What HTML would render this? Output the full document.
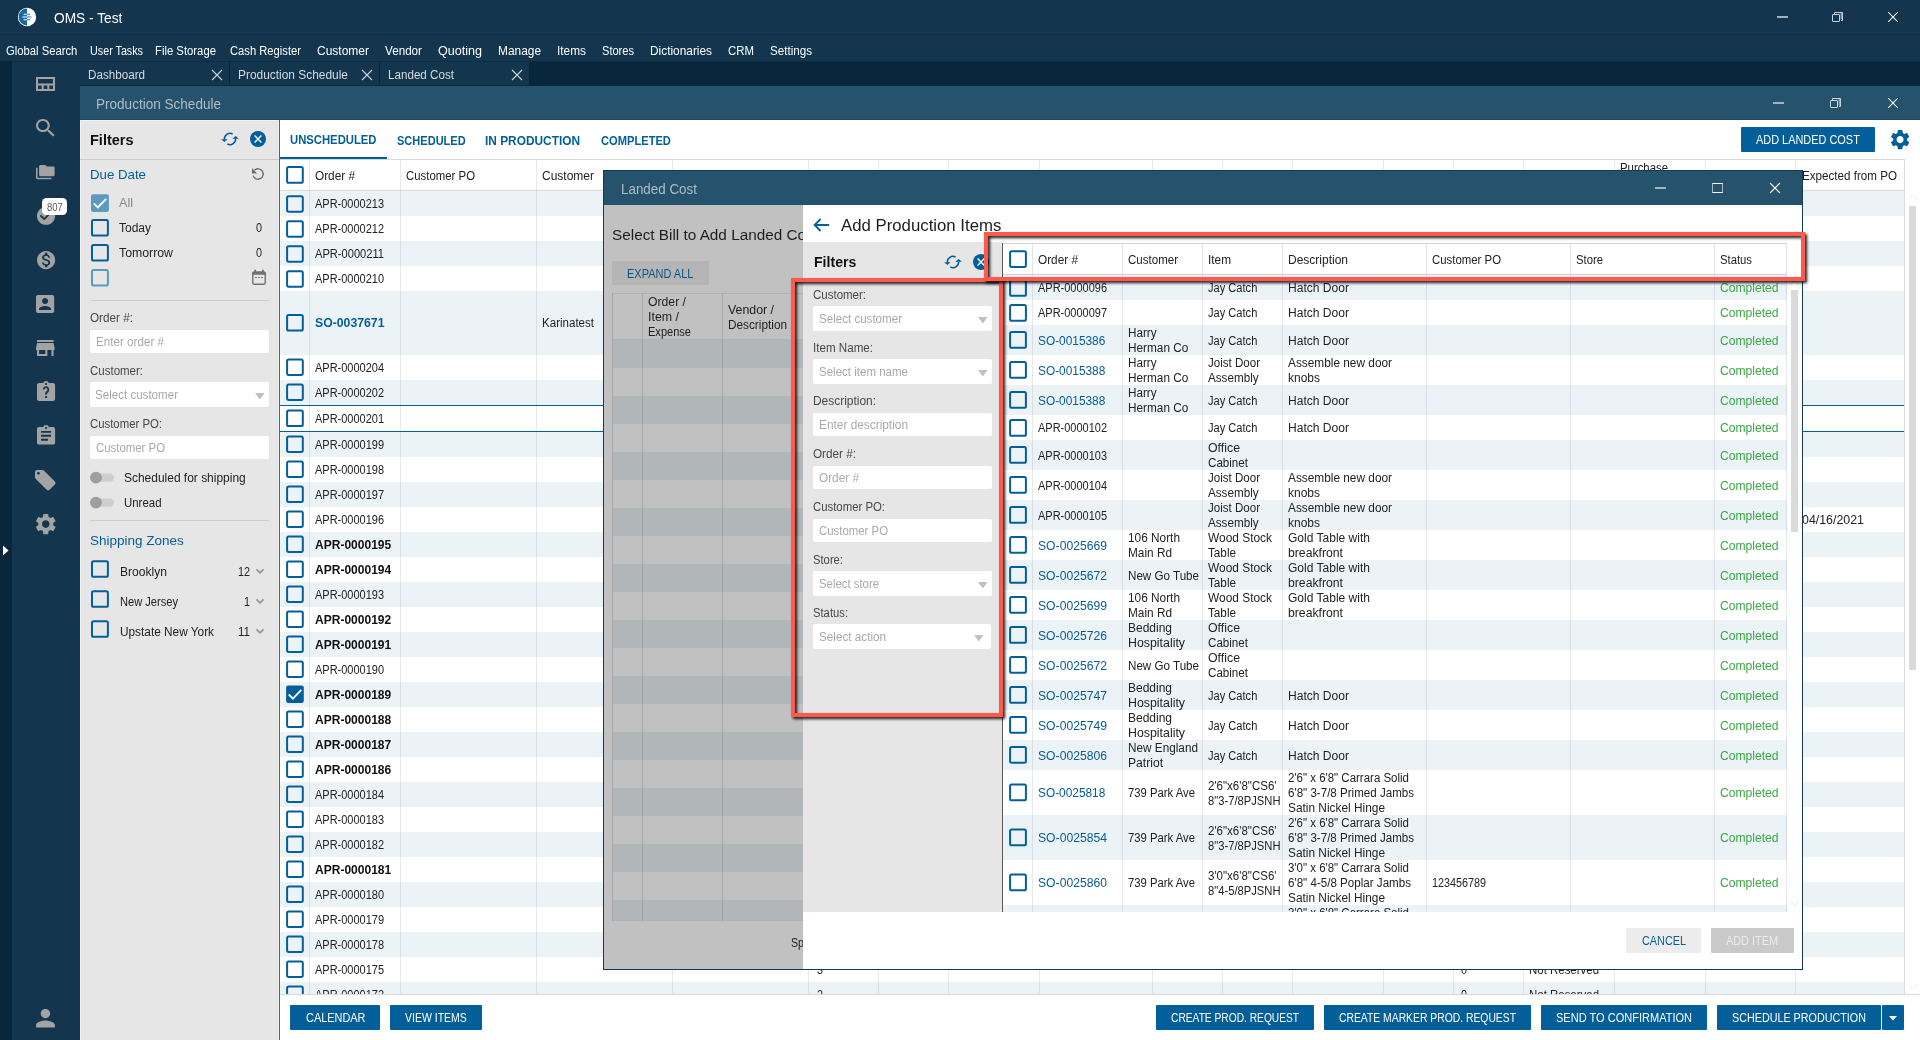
<!DOCTYPE html><html><head><meta charset="utf-8"><title>OMS - Test</title><style>
html,body{margin:0;padding:0}
body{width:1920px;height:1040px;overflow:hidden;position:relative;background:#fff;
font-family:"Liberation Sans",sans-serif;}
div,svg,.t{position:absolute}
.t{white-space:nowrap;line-height:1;transform-origin:0 50%}
svg{overflow:visible}
</style></head><body><div style="left:0px;top:0px;width:1920px;height:1040px;background:#fff;"></div><div style="left:0px;top:0px;width:1920px;height:61px;background:#13364e;"></div><div style="left:0px;top:34px;width:1920px;height:1px;background:#0e2c43;"></div><div style="left:0px;top:61px;width:1920px;height:25px;background:#09273c;"></div><div style="left:0px;top:61px;width:12px;height:979px;background:#09273c;"></div><div style="left:12px;top:62px;width:68px;height:978px;background:#13364e;"></div><div style="left:12px;top:61px;width:1908px;height:1px;background:#0b2b43;"></div><svg style="left:17px;top:7px;width:20px;height:20px" viewBox="0 0 20 20"><circle cx="10" cy="10" r="9.2" fill="#fff"/><path d="M10 1.6 A8.4 8.4 0 0 0 10 18.4 Z" fill="#1468a6"/><g stroke="#fff" stroke-width="1.1"><path d="M6.6 7.3H10M5.4 10H10M6.6 12.7H10"/></g><g stroke="#1468a6" stroke-width="1.1"><path d="M10 7.3H13.2M10 10H14.4M10 12.7H13.2"/></g><path d="M6 10H14" stroke="#8fb8d6" stroke-width="2.2"/></svg><span class="t" style="left:54.20px;top:11.00px;font-size:14px;color:#fff;transform:scaleX(0.9806);">OMS - Test</span><div style="left:1777px;top:16px;width:11px;height:2px;background:#a3b2bd;"></div><div style="left:1832px;top:14px;width:8px;height:8px;border:1px solid #c9d3da;box-sizing:border-box;border-radius:1px;"></div><svg style="left:1834px;top:12px;width:9px;height:9px" viewBox="0 0 9 9"><path d="M0.5 2V0.5H8.5V8.5H7" fill="none" stroke="#c9d3da" stroke-width="1"/><path d="M6.5 0.5H8.5V7.5H6.5Z" fill="#c9d3da" opacity=".6"/></svg><svg style="left:1887.5px;top:12px;width:10px;height:10px" viewBox="0 0 10 10"><path d="M0.2 0.2L9.8 9.8M9.8 0.2L0.2 9.8" stroke="#f4f6f8" stroke-width="1.05"/></svg><span class="t" style="left:6.20px;top:45.00px;font-size:12px;color:#fff;transform:scaleX(0.9376);">Global Search</span><span class="t" style="left:90.00px;top:45.00px;font-size:12px;color:#fff;transform:scaleX(0.8964);">User Tasks</span><span class="t" style="left:155.00px;top:45.00px;font-size:12px;color:#fff;transform:scaleX(0.9428);">File Storage</span><span class="t" style="left:230.00px;top:45.00px;font-size:12px;color:#fff;transform:scaleX(0.9338);">Cash Register</span><span class="t" style="left:317.00px;top:45.00px;font-size:12px;color:#fff;transform:scaleX(0.9997);">Customer</span><span class="t" style="left:385.00px;top:45.00px;font-size:12px;color:#fff;transform:scaleX(0.9728);">Vendor</span><span class="t" style="left:438.00px;top:45.00px;font-size:12px;color:#fff;transform:scaleX(1.0469);">Quoting</span><span class="t" style="left:498.00px;top:45.00px;font-size:12px;color:#fff;transform:scaleX(0.9915);">Manage</span><span class="t" style="left:557.00px;top:45.00px;font-size:12px;color:#fff;transform:scaleX(0.9885);">Items</span><span class="t" style="left:602.00px;top:45.00px;font-size:12px;color:#fff;transform:scaleX(0.9226);">Stores</span><span class="t" style="left:650.00px;top:45.00px;font-size:12px;color:#fff;transform:scaleX(0.9890);">Dictionaries</span><span class="t" style="left:728.00px;top:45.00px;font-size:12px;color:#fff;transform:scaleX(0.9514);">CRM</span><span class="t" style="left:770.00px;top:45.00px;font-size:12px;color:#fff;transform:scaleX(0.9686);">Settings</span><div style="left:80px;top:62px;width:149px;height:23px;background:#13364e;"></div><span class="t" style="left:88.00px;top:69.00px;font-size:12px;color:#d6dadd;transform:scaleX(0.9709);">Dashboard</span><svg style="left:212px;top:69.5px;width:10px;height:10px" viewBox="0 0 10 10"><path d="M0 0L10 10M10 0L0 10" stroke="#c9d3da" stroke-width="1.1"/></svg><div style="left:230px;top:62px;width:149px;height:23px;background:#13364e;"></div><span class="t" style="left:238.00px;top:69.00px;font-size:12px;color:#d6dadd;transform:scaleX(0.9933);">Production Schedule</span><svg style="left:362px;top:69.5px;width:10px;height:10px" viewBox="0 0 10 10"><path d="M0 0L10 10M10 0L0 10" stroke="#c9d3da" stroke-width="1.1"/></svg><div style="left:380px;top:62px;width:149px;height:23px;background:#13364e;"></div><span class="t" style="left:388.00px;top:69.00px;font-size:12px;color:#d6dadd;transform:scaleX(0.9698);">Landed Cost</span><svg style="left:512px;top:69.5px;width:10px;height:10px" viewBox="0 0 10 10"><path d="M0 0L10 10M10 0L0 10" stroke="#c9d3da" stroke-width="1.1"/></svg><svg style="left:36px;top:77px;width:19px;height:14px" viewBox="0 0 19 14"><path d="M1 1H18V13H1Z M1 7.6H18 M6.7 7.6V13 M12.3 7.6V13" fill="none" stroke="#a3a3a3" stroke-width="2"/></svg><svg style="left:36px;top:119.2px;width:18.60px;height:17.60px" viewBox="3 3 17.49 17.49" preserveAspectRatio="none" fill="#a3a3a3"><path d="M15.5 14h-.79l-.28-.27C15.41 12.59 16 11.11 16 9.5 16 5.91 13.09 3 9.5 3S3 5.91 3 9.5 5.91 16 9.5 16c1.61 0 3.09-.59 4.23-1.57l.27.28v.79l5 4.99L20.49 19l-4.99-5zm-6 0C7.01 14 5 11.99 5 9.5S7.01 5 9.5 5 14 7.01 14 9.5 11.99 14 9.5 14z"/></svg><svg style="left:36px;top:164.8px;width:18.60px;height:14.20px" viewBox="0 2 24 20" preserveAspectRatio="none" fill="#a3a3a3"><path d="M2 6H0v5h.01L0 20c0 1.1.9 2 2 2h18v-2H2V6zm20-2h-8l-2-2H6c-1.1 0-1.99.9-1.99 2L4 16c0 1.1.9 2 2 2h16c1.1 0 2-.9 2-2V6c0-1.1-.9-2-2-2z"/></svg><svg style="left:36.5px;top:207.3px;width:18.10px;height:17.80px" viewBox="2 2 20 20" preserveAspectRatio="none" fill="#a3a3a3"><path d="M12 2C6.48 2 2 6.48 2 12s4.48 10 10 10 10-4.48 10-10S17.52 2 12 2zm-2 15l-5-5 1.41-1.41L10 14.17l7.59-7.59L19 8l-9 9z"/></svg><svg style="left:36.5px;top:251px;width:18.20px;height:18.20px" viewBox="2 2 20 20" preserveAspectRatio="none" fill="#a3a3a3"><path d="M12 2C6.48 2 2 6.48 2 12s4.48 10 10 10 10-4.48 10-10S17.52 2 12 2zm1.41 16.09V20h-2.67v-1.93c-1.71-.36-3.16-1.46-3.27-3.4h1.96c.1 1.05.82 1.87 2.65 1.87 1.96 0 2.4-.98 2.4-1.59 0-.83-.44-1.61-2.67-2.14-2.48-.6-4.18-1.62-4.18-3.67 0-1.72 1.39-2.84 3.11-3.21V4h2.67v1.95c1.86.45 2.79 1.86 2.85 3.39H14.3c-.05-1.11-.64-1.87-2.22-1.87-1.5 0-2.4.68-2.4 1.64 0 .84.65 1.39 2.67 1.91s4.18 1.39 4.18 3.91c-.01 1.83-1.38 2.83-3.12 3.16z"/></svg><svg style="left:36.4px;top:294.9px;width:18.20px;height:18.10px" viewBox="3 3 18 18" preserveAspectRatio="none" fill="#a3a3a3"><path d="M3 5v14c0 1.1.89 2 2 2h14c1.1 0 2-.9 2-2V5c0-1.1-.9-2-2-2H5c-1.11 0-2 .9-2 2zm12 4c0 1.66-1.34 3-3 3s-3-1.34-3-3 1.34-3 3-3 3 1.34 3 3zm-9 8c0-2 4-3.1 6-3.1s6 1.1 6 3.1v1H6v-1z"/></svg><svg style="left:36.2px;top:340px;width:18.60px;height:16.00px" viewBox="3 4 18 16" preserveAspectRatio="none" fill="#a3a3a3"><path d="M20 4H4v2h16V4zm1 10v-2l-1-5H4l-1 5v2h1v6h10v-6h4v6h2v-6h1zm-9 4H6v-4h6v4z"/></svg><svg style="left:36.5px;top:381px;width:18.10px;height:20.00px" viewBox="3 1 18 20" preserveAspectRatio="none" fill="#a3a3a3"><path d="M19 3h-4.18C14.4 1.84 13.3 1 12 1c-1.3 0-2.4.84-2.82 2H5c-1.1 0-2 .9-2 2v14c0 1.1.9 2 2 2h14c1.1 0 2-.9 2-2V5c0-1.1-.9-2-2-2zm-7 0c.55 0 1 .45 1 1s-.45 1-1 1-1-.45-1-1 .45-1 1-1zm1 15h-2v-2h2v2zm1.6-6.3l-.8.8c-.55.56-.8 1.0-.8 2H11v-.45c0-.95.35-1.75.9-2.3l1.05-1.1c.3-.3.45-.7.45-1.15 0-.9-.65-1.6-1.4-1.6s-1.4.7-1.4 1.6H8.8c0-1.9 1.45-3.3 3.2-3.3s3.2 1.4 3.2 3.3c0 .85-.3 1.6-.6 2.2z"/></svg><svg style="left:36.5px;top:425.4px;width:18.10px;height:19.60px" viewBox="3 1 18 20" preserveAspectRatio="none" fill="#a3a3a3"><path d="M19 3h-4.18C14.4 1.84 13.3 1 12 1c-1.3 0-2.4.84-2.82 2H5c-1.1 0-2 .9-2 2v14c0 1.1.9 2 2 2h14c1.1 0 2-.9 2-2V5c0-1.1-.9-2-2-2zm-7 0c.55 0 1 .45 1 1s-.45 1-1 1-1-.45-1-1 .45-1 1-1zm2 14H7v-2h7v2zm3-4H7v-2h10v2zm0-4H7V7h10v2z"/></svg><svg style="left:35px;top:469.7px;width:20.50px;height:20.30px" viewBox="2 2 20 20" preserveAspectRatio="none" fill="#a3a3a3"><path d="M4 2H9.2c.55 0 1.05.22 1.41.58l10.8 10.8c.78.78.78 2.05 0 2.83l-5.2 5.2c-.78.78-2.05.78-2.83 0L2.58 10.61C2.22 10.25 2 9.75 2 9.2V4c0-1.1.9-2 2-2zM5.3 6.7c.77 0 1.4-.63 1.4-1.4s-.63-1.4-1.4-1.4-1.4.63-1.4 1.4.63 1.4 1.4 1.4z" fill-rule="evenodd"/></svg><svg style="left:35.6px;top:513.9px;width:19.50px;height:20.20px" viewBox="2.62 2.4 18.759999999999998 19.200000000000003" preserveAspectRatio="none" fill="#a3a3a3"><path d="M19.14 12.94c.04-.3.06-.61.06-.94 0-.32-.02-.64-.07-.94l2.03-1.58c.18-.14.23-.41.12-.61l-1.92-3.32c-.12-.22-.37-.29-.59-.22l-2.39.96c-.5-.38-1.03-.7-1.62-.94l-.36-2.54c-.04-.24-.24-.41-.48-.41h-3.84c-.24 0-.43.17-.47.41l-.36 2.54c-.59.24-1.13.57-1.62.94l-2.39-.96c-.22-.08-.47 0-.59.22L2.74 8.87c-.12.21-.08.47.12.61l2.03 1.58c-.05.3-.09.63-.09.94s.02.64.07.94l-2.03 1.58c-.18.14-.23.41-.12.61l1.92 3.32c.12.22.37.29.59.22l2.39-.96c.5.38 1.03.7 1.62.94l.36 2.54c.05.24.24.41.48.41h3.84c.24 0 .44-.17.47-.41l.36-2.54c.59-.24 1.13-.56 1.62-.94l2.39.96c.22.08.47 0 .59-.22l1.92-3.32c.12-.22.07-.47-.12-.61l-2.01-1.58zM12 15.6c-1.98 0-3.6-1.62-3.6-3.6s1.62-3.6 3.6-3.6 3.6 1.62 3.6 3.6-1.62 3.6-3.6 3.6z"/></svg><svg style="left:36px;top:1008.8px;width:18.90px;height:18.40px" viewBox="4 4 16 16" preserveAspectRatio="none" fill="#a3a3a3"><path d="M12 12c2.21 0 4-1.79 4-4s-1.79-4-4-4-4 1.79-4 4 1.79 4 4 4zm0 2c-2.67 0-8 1.34-8 4v2h16v-2c0-2.66-5.33-4-8-4z"/></svg><div style="left:42px;top:198px;width:25px;height:17px;background:#fff;border-radius:4.5px;"></div><span class="t" style="left:46.67px;top:203.00px;font-size:10px;color:#555;transform:scaleX(0.9500);">807</span><svg style="left:3px;top:545px;width:6px;height:11px" viewBox="0 0 6 11"><path d="M0 0.5L5.5 5.5L0 10.5Z" fill="#fff"/></svg><div style="left:80px;top:86px;width:1840px;height:34px;background:#25536e;"></div><span class="t" style="left:96.00px;top:97.00px;font-size:14px;color:#b3bcc3;transform:scaleX(0.9675);">Production Schedule</span><div style="left:1773px;top:102px;width:11px;height:2px;background:#a3b2bd;"></div><div style="left:1830px;top:100px;width:8px;height:8px;border:1px solid #c9d3da;box-sizing:border-box;border-radius:1px;"></div><svg style="left:1832px;top:98px;width:9px;height:9px" viewBox="0 0 9 9"><path d="M0.5 2V0.5H8.5V8.5H7" fill="none" stroke="#c9d3da" stroke-width="1"/><path d="M6.5 0.5H8.5V7.5H6.5Z" fill="#c9d3da" opacity=".6"/></svg><svg style="left:1887.5px;top:98px;width:10px;height:10px" viewBox="0 0 10 10"><path d="M0.2 0.2L9.8 9.8M9.8 0.2L0.2 9.8" stroke="#f4f6f8" stroke-width="1.05"/></svg><div style="left:80px;top:120px;width:199px;height:920px;background:#e6e6e6;"></div><div style="left:80px;top:120px;width:1px;height:920px;background:#f4f4f4;"></div><div style="left:80px;top:120px;width:199px;height:1px;background:#f1f1f1;"></div><div style="left:278px;top:121px;width:1px;height:919px;background:#efefef;"></div><div style="left:279px;top:120px;width:1px;height:920px;background:#5f5f5f;"></div><div style="left:80px;top:119px;width:1840px;height:1px;background:#1c4663;"></div><span class="t" style="left:90.00px;top:132.00px;font-size:15px;color:#111;font-weight:bold;transform:scaleX(0.9686);">Filters</span><svg style="left:220px;top:131px;width:20px;height:16px" viewBox="0 0 20 16"><g fill="none" stroke="#035f99" stroke-width="1.55"><path d="M4.4 8.6A5.6 5.6 0 0 1 12.6 3.05"/><path d="M15.6 7.4A5.6 5.6 0 0 1 7.4 12.95"/></g><path d="M1.1 8.3H7.7L4.4 11.1Z" fill="#035f99"/><path d="M12.3 7.7H18.9L15.6 4.9Z" fill="#035f99"/></svg><svg style="left:250px;top:131px;width:16px;height:16px" viewBox="0 0 16 16"><circle cx="8" cy="8" r="8" fill="#035f99"/><path d="M4.6 4.6L11.4 11.4M11.4 4.6L4.6 11.4" stroke="#fff" stroke-width="1.4"/></svg><div style="left:80px;top:159px;width:199px;height:1px;background:#cdcdcd;"></div><span class="t" style="left:90.00px;top:168.00px;font-size:13px;color:#035f99;transform:scaleX(1.0196);">Due Date</span><svg style="left:251px;top:166.5px;width:14px;height:14px" viewBox="0 0 14 14"><path d="M3.45 3.2A5.2 5.2 0 1 1 2.05 8.61" fill="none" stroke="#6c6c6c" stroke-width="1.4"/><path d="M1 1.2V6.4H6.1Z" fill="#6c6c6c"/></svg><svg style="left:90px;top:193px;width:21px;height:21px" viewBox="0 0 21 21"><rect x="1.00" y="1.20" width="17.9" height="17.7" rx="2.2" fill="#5b9bc0"/><path d="M3.70 10.40L7.80 14.50L16.20 5.80" fill="none" stroke="#fff" stroke-width="1.8"/></svg><span class="t" style="left:119.00px;top:197.00px;font-size:12px;color:#8a8a8a;transform:scaleX(1.0497);">All</span><svg style="left:90px;top:218px;width:21px;height:21px" viewBox="0 0 21 21"><rect x="2.00" y="2.10" width="15.899999999999999" height="15.5" rx="1.6" fill="none" stroke="#035f99" stroke-width="2"/></svg><span class="t" style="left:119.00px;top:222.00px;font-size:12px;color:#222;transform:scaleX(0.9993);">Today</span><span class="t" style="left:256.00px;top:222.00px;font-size:12px;color:#222;transform:scaleX(0.8990);">0</span><svg style="left:90px;top:243px;width:21px;height:21px" viewBox="0 0 21 21"><rect x="2.00" y="2.10" width="15.899999999999999" height="15.5" rx="1.6" fill="none" stroke="#035f99" stroke-width="2"/></svg><span class="t" style="left:119.00px;top:247.00px;font-size:12px;color:#222;transform:scaleX(1.0251);">Tomorrow</span><span class="t" style="left:256.00px;top:247.00px;font-size:12px;color:#222;transform:scaleX(0.8990);">0</span><svg style="left:90px;top:268px;width:21px;height:21px" viewBox="0 0 21 21"><rect x="2.00" y="2.10" width="15.899999999999999" height="15.5" rx="1.6" fill="none" stroke="#5b9bc0" stroke-width="2"/></svg><svg style="left:252px;top:269px;width:15px;height:17px" viewBox="0 0 15 17"><rect x="0.8" y="3.2" width="12.4" height="12.1" rx="1.6" fill="none" stroke="#727272" stroke-width="1.4"/><path d="M0.1 4.2Q0.1 2.5 1.8 2.5H12.2Q13.9 2.5 13.9 4.2V5.75H0.1Z M2.25 0.75H4V2.6H2.25Z M10.1 0.75H11.85V2.6H10.1Z" fill="#727272"/><path d="M3 8.5H4.8M6.1 8.5H7.9M9.2 8.5H11" stroke="#727272" stroke-width="1.1"/></svg><div style="left:90px;top:300px;width:179px;height:1px;background:#cdcdcd;"></div><span class="t" style="left:90.00px;top:312.00px;font-size:12px;color:#484848;transform:scaleX(0.9769);">Order #:</span><div style="left:90.4px;top:329.7px;width:178.4px;height:23.6px;background:#fff;border-radius:2px;"></div><span class="t" style="left:96.40px;top:336.00px;font-size:12px;color:#a9a9a9;transform:scaleX(0.9709);">Enter order #</span><span class="t" style="left:90.00px;top:365.00px;font-size:12px;color:#484848;transform:scaleX(0.9576);">Customer:</span><div style="left:90px;top:382px;width:179px;height:24.5px;background:#fff;border-radius:2px;"></div><span class="t" style="left:95.00px;top:389.00px;font-size:12px;color:#a9a9a9;transform:scaleX(0.9647);">Select customer</span><svg style="left:255px;top:392.75px;width:9.6px;height:6.4px" viewBox="0 0 9.6 6.4"><path d="M0 0H9.6L4.8 6.4Z" fill="#c0c0c0"/></svg><span class="t" style="left:90.00px;top:418.00px;font-size:12px;color:#484848;transform:scaleX(0.9471);">Customer PO:</span><div style="left:90.4px;top:435.7px;width:178.4px;height:23.6px;background:#fff;border-radius:2px;"></div><span class="t" style="left:96.40px;top:442.00px;font-size:12px;color:#a9a9a9;transform:scaleX(0.9493);">Customer PO</span><svg style="left:89px;top:469px;width:27px;height:17px" viewBox="0 0 27 17"><rect x="3" y="4.40" width="22" height="8.4" rx="4.2" fill="#cecece"/><circle cx="7" cy="8.60" r="5.95" fill="#9e9e9e"/></svg><span class="t" style="left:123.80px;top:472.00px;font-size:12px;color:#222;transform:scaleX(0.9968);">Scheduled for shipping</span><svg style="left:89px;top:494px;width:27px;height:17px" viewBox="0 0 27 17"><rect x="3" y="4.40" width="22" height="8.4" rx="4.2" fill="#cecece"/><circle cx="7" cy="8.60" r="5.95" fill="#9e9e9e"/></svg><span class="t" style="left:124.00px;top:497.00px;font-size:12px;color:#222;transform:scaleX(0.9528);">Unread</span><div style="left:90px;top:520px;width:179px;height:1px;background:#cdcdcd;"></div><span class="t" style="left:90.00px;top:534.00px;font-size:13px;color:#035f99;transform:scaleX(1.0372);">Shipping Zones</span><svg style="left:90px;top:559px;width:21px;height:21px" viewBox="0 0 21 21"><rect x="2.00" y="2.30" width="15.899999999999999" height="15.5" rx="1.6" fill="none" stroke="#035f99" stroke-width="2"/></svg><span class="t" style="left:120.00px;top:566.00px;font-size:12px;color:#222;transform:scaleX(1.0067);">Brooklyn</span><span class="t" style="left:238.30px;top:566.00px;font-size:12px;color:#222;transform:scaleX(0.8990);">12</span><svg style="left:256px;top:568px;width:9px;height:7px" viewBox="0 0 9 7"><path d="M0.5 1.3L4 4.9L7.5 1.3" fill="none" stroke="#939393" stroke-width="1.7"/></svg><svg style="left:90px;top:589px;width:21px;height:21px" viewBox="0 0 21 21"><rect x="2.00" y="2.30" width="15.899999999999999" height="15.5" rx="1.6" fill="none" stroke="#035f99" stroke-width="2"/></svg><span class="t" style="left:120.00px;top:596.00px;font-size:12px;color:#222;transform:scaleX(0.9253);">New Jersey</span><span class="t" style="left:244.30px;top:596.00px;font-size:12px;color:#222;transform:scaleX(0.8990);">1</span><svg style="left:256px;top:598px;width:9px;height:7px" viewBox="0 0 9 7"><path d="M0.5 1.3L4 4.9L7.5 1.3" fill="none" stroke="#939393" stroke-width="1.7"/></svg><svg style="left:90px;top:619px;width:21px;height:21px" viewBox="0 0 21 21"><rect x="2.00" y="2.30" width="15.899999999999999" height="15.5" rx="1.6" fill="none" stroke="#035f99" stroke-width="2"/></svg><span class="t" style="left:120.00px;top:626.00px;font-size:12px;color:#222;transform:scaleX(0.9855);">Upstate New York</span><span class="t" style="left:238.30px;top:626.00px;font-size:12px;color:#222;transform:scaleX(0.9633);">11</span><svg style="left:256px;top:628px;width:9px;height:7px" viewBox="0 0 9 7"><path d="M0.5 1.3L4 4.9L7.5 1.3" fill="none" stroke="#939393" stroke-width="1.7"/></svg><span class="t" style="left:290.00px;top:134.00px;font-size:12px;color:#035f99;font-weight:bold;transform:scaleX(0.9401);">UNSCHEDULED</span><span class="t" style="left:396.50px;top:135.00px;font-size:12px;color:#035f99;font-weight:bold;transform:scaleX(0.9200);">SCHEDULED</span><span class="t" style="left:485.40px;top:135.00px;font-size:12px;color:#035f99;font-weight:bold;transform:scaleX(0.9906);">IN PRODUCTION</span><span class="t" style="left:600.60px;top:135.00px;font-size:12px;color:#035f99;font-weight:bold;transform:scaleX(0.9278);">COMPLETED</span><div style="left:280px;top:157px;width:107px;height:2px;background:#035f99;"></div><div style="left:1741px;top:127px;width:134px;height:25px;background:#035f99;border-radius:1px;"></div><span class="t" style="left:1756.20px;top:134.00px;font-size:12px;color:#fff;transform:scaleX(0.9104);">ADD LANDED COST</span><svg style="left:1891px;top:130px;width:18.20px;height:19.20px" viewBox="2.62 2.4 18.759999999999998 19.200000000000003" preserveAspectRatio="none" fill="#035f99"><path d="M19.14 12.94c.04-.3.06-.61.06-.94 0-.32-.02-.64-.07-.94l2.03-1.58c.18-.14.23-.41.12-.61l-1.92-3.32c-.12-.22-.37-.29-.59-.22l-2.39.96c-.5-.38-1.03-.7-1.62-.94l-.36-2.54c-.04-.24-.24-.41-.48-.41h-3.84c-.24 0-.43.17-.47.41l-.36 2.54c-.59.24-1.13.57-1.62.94l-2.39-.96c-.22-.08-.47 0-.59.22L2.74 8.87c-.12.21-.08.47.12.61l2.03 1.58c-.05.3-.09.63-.09.94s.02.64.07.94l-2.03 1.58c-.18.14-.23.41-.12.61l1.92 3.32c.12.22.37.29.59.22l2.39-.96c.5.38 1.03.7 1.62.94l.36 2.54c.05.24.24.41.48.41h3.84c.24 0 .44-.17.47-.41l.36-2.54c.59-.24 1.13-.56 1.62-.94l2.39.96c.22.08.47 0 .59-.22l1.92-3.32c.12-.22.07-.47-.12-.61l-2.01-1.58zM12 15.6c-1.98 0-3.6-1.62-3.6-3.6s1.62-3.6 3.6-3.6 3.6 1.62 3.6 3.6-1.62 3.6-3.6 3.6z"/></svg><div style="left:280px;top:159px;width:1625px;height:1px;background:#d9dcde;"></div><div style="left:280px;top:190px;width:1624px;height:1px;background:#d9dcde;"></div><div style="left:280px;top:191px;width:1624px;height:803px;overflow:hidden;"><div style="left:0px;top:0px;width:1624px;height:25px;background:#ecf3f7;"></div><div style="left:0px;top:50px;width:1624px;height:25px;background:#ecf3f7;"></div><div style="left:0px;top:100px;width:1624px;height:64px;background:#ecf3f7;"></div><div style="left:0px;top:189px;width:1624px;height:25px;background:#ecf3f7;"></div><div style="left:0px;top:241px;width:1624px;height:25px;background:#ecf3f7;"></div><div style="left:0px;top:291px;width:1624px;height:25px;background:#ecf3f7;"></div><div style="left:0px;top:341px;width:1624px;height:25px;background:#ecf3f7;"></div><div style="left:0px;top:391px;width:1624px;height:25px;background:#ecf3f7;"></div><div style="left:0px;top:441px;width:1624px;height:25px;background:#ecf3f7;"></div><div style="left:0px;top:491px;width:1624px;height:25px;background:#ecf3f7;"></div><div style="left:0px;top:541px;width:1624px;height:25px;background:#ecf3f7;"></div><div style="left:0px;top:591px;width:1624px;height:25px;background:#ecf3f7;"></div><div style="left:0px;top:641px;width:1624px;height:25px;background:#ecf3f7;"></div><div style="left:0px;top:691px;width:1624px;height:25px;background:#ecf3f7;"></div><div style="left:0px;top:741px;width:1624px;height:25px;background:#ecf3f7;"></div><div style="left:0px;top:791px;width:1624px;height:25px;background:#ecf3f7;"></div></div><div style="left:309px;top:160px;width:1px;height:834px;background:rgba(110,125,135,0.17);"></div><div style="left:400px;top:160px;width:1px;height:834px;background:rgba(110,125,135,0.17);"></div><div style="left:536px;top:160px;width:1px;height:834px;background:rgba(110,125,135,0.17);"></div><div style="left:672px;top:160px;width:1px;height:834px;background:rgba(110,125,135,0.17);"></div><div style="left:808px;top:160px;width:1px;height:834px;background:rgba(110,125,135,0.17);"></div><div style="left:878px;top:160px;width:1px;height:834px;background:rgba(110,125,135,0.17);"></div><div style="left:948px;top:160px;width:1px;height:834px;background:rgba(110,125,135,0.17);"></div><div style="left:1039px;top:160px;width:1px;height:834px;background:rgba(110,125,135,0.17);"></div><div style="left:1152px;top:160px;width:1px;height:834px;background:rgba(110,125,135,0.17);"></div><div style="left:1222px;top:160px;width:1px;height:834px;background:rgba(110,125,135,0.17);"></div><div style="left:1292px;top:160px;width:1px;height:834px;background:rgba(110,125,135,0.17);"></div><div style="left:1383px;top:160px;width:1px;height:834px;background:rgba(110,125,135,0.17);"></div><div style="left:1453px;top:160px;width:1px;height:834px;background:rgba(110,125,135,0.17);"></div><div style="left:1523px;top:160px;width:1px;height:834px;background:rgba(110,125,135,0.17);"></div><div style="left:1614px;top:160px;width:1px;height:834px;background:rgba(110,125,135,0.17);"></div><div style="left:1705px;top:160px;width:1px;height:834px;background:rgba(110,125,135,0.17);"></div><div style="left:1795px;top:160px;width:1px;height:834px;background:rgba(110,125,135,0.17);"></div><div style="left:1904px;top:160px;width:1px;height:835px;background:#d9dcde;"></div><div style="left:280px;top:994px;width:1640px;height:1px;background:#d9dcde;"></div><svg style="left:285px;top:165px;width:21px;height:21px" viewBox="0 0 21 21"><rect x="2.10" y="2.10" width="15.7" height="15.7" rx="1.6" fill="none" stroke="#035f99" stroke-width="2"/></svg><span class="t" style="left:315.40px;top:170.00px;font-size:12px;color:#222;transform:scaleX(0.9832);">Order #</span><span class="t" style="left:406.30px;top:170.00px;font-size:12px;color:#222;transform:scaleX(0.9493);">Customer PO</span><span class="t" style="left:542.20px;top:170.00px;font-size:12px;color:#222;transform:scaleX(0.9997);">Customer</span><span class="t" style="left:1620.00px;top:162.00px;font-size:12px;color:#222;transform:scaleX(0.9468);">Purchase</span><span class="t" style="left:1801.50px;top:170.00px;font-size:12px;color:#222;transform:scaleX(0.9690);">Expected from PO</span><div style="left:280px;top:191px;width:1624px;height:803px;overflow:hidden;"><svg style="left:5px;top:3px;width:21px;height:21px" viewBox="0 0 21 21"><rect x="2.10" y="2.20" width="15.7" height="15.5" rx="1.6" fill="none" stroke="#035f99" stroke-width="2"/></svg><span class="t" style="left:35.40px;top:7.00px;font-size:12px;color:#222;transform:scaleX(0.9152);">APR-0000213</span><svg style="left:5px;top:28px;width:21px;height:21px" viewBox="0 0 21 21"><rect x="2.10" y="2.20" width="15.7" height="15.5" rx="1.6" fill="none" stroke="#035f99" stroke-width="2"/></svg><span class="t" style="left:35.40px;top:32.00px;font-size:12px;color:#222;transform:scaleX(0.9152);">APR-0000212</span><svg style="left:5px;top:53px;width:21px;height:21px" viewBox="0 0 21 21"><rect x="2.10" y="2.20" width="15.7" height="15.5" rx="1.6" fill="none" stroke="#035f99" stroke-width="2"/></svg><span class="t" style="left:35.40px;top:57.00px;font-size:12px;color:#222;transform:scaleX(0.9262);">APR-0000211</span><svg style="left:5px;top:78px;width:21px;height:21px" viewBox="0 0 21 21"><rect x="2.10" y="2.20" width="15.7" height="15.5" rx="1.6" fill="none" stroke="#035f99" stroke-width="2"/></svg><span class="t" style="left:35.40px;top:82.00px;font-size:12px;color:#222;transform:scaleX(0.9152);">APR-0000210</span><svg style="left:5px;top:122px;width:21px;height:21px" viewBox="0 0 21 21"><rect x="2.10" y="2.00" width="15.7" height="15.5" rx="1.6" fill="none" stroke="#035f99" stroke-width="2"/></svg><span class="t" style="left:35.40px;top:126.00px;font-size:12px;color:#035f99;font-weight:bold;transform:scaleX(1.0213);">SO-0037671</span><span class="t" style="left:262.20px;top:126.00px;font-size:12px;color:#222;transform:scaleX(0.9624);">Karinatest</span><svg style="left:5px;top:166px;width:21px;height:21px" viewBox="0 0 21 21"><rect x="2.10" y="2.40" width="15.7" height="15.5" rx="1.6" fill="none" stroke="#035f99" stroke-width="2"/></svg><span class="t" style="left:35.40px;top:171.00px;font-size:12px;color:#222;transform:scaleX(0.9152);">APR-0000204</span><svg style="left:5px;top:191px;width:21px;height:21px" viewBox="0 0 21 21"><rect x="2.10" y="2.40" width="15.7" height="15.5" rx="1.6" fill="none" stroke="#035f99" stroke-width="2"/></svg><span class="t" style="left:35.40px;top:196.00px;font-size:12px;color:#222;transform:scaleX(0.9152);">APR-0000202</span><div style="left:0px;top:214px;width:1624px;height:1px;background:#035f99;"></div><div style="left:0px;top:240px;width:1624px;height:1px;background:#035f99;"></div><svg style="left:5px;top:217px;width:21px;height:21px" viewBox="0 0 21 21"><rect x="2.10" y="2.60" width="15.7" height="15.5" rx="1.6" fill="none" stroke="#035f99" stroke-width="2"/></svg><span class="t" style="left:35.40px;top:222.00px;font-size:12px;color:#222;transform:scaleX(0.9152);">APR-0000201</span><svg style="left:5px;top:243px;width:21px;height:21px" viewBox="0 0 21 21"><rect x="2.10" y="2.40" width="15.7" height="15.5" rx="1.6" fill="none" stroke="#035f99" stroke-width="2"/></svg><span class="t" style="left:35.40px;top:248.00px;font-size:12px;color:#222;transform:scaleX(0.9152);">APR-0000199</span><svg style="left:5px;top:268px;width:21px;height:21px" viewBox="0 0 21 21"><rect x="2.10" y="2.40" width="15.7" height="15.5" rx="1.6" fill="none" stroke="#035f99" stroke-width="2"/></svg><span class="t" style="left:35.40px;top:273.00px;font-size:12px;color:#222;transform:scaleX(0.9152);">APR-0000198</span><svg style="left:5px;top:293px;width:21px;height:21px" viewBox="0 0 21 21"><rect x="2.10" y="2.40" width="15.7" height="15.5" rx="1.6" fill="none" stroke="#035f99" stroke-width="2"/></svg><span class="t" style="left:35.40px;top:298.00px;font-size:12px;color:#222;transform:scaleX(0.9152);">APR-0000197</span><svg style="left:5px;top:318px;width:21px;height:21px" viewBox="0 0 21 21"><rect x="2.10" y="2.40" width="15.7" height="15.5" rx="1.6" fill="none" stroke="#035f99" stroke-width="2"/></svg><span class="t" style="left:35.40px;top:323.00px;font-size:12px;color:#222;transform:scaleX(0.9152);">APR-0000196</span><span class="t" style="left:1521.50px;top:323.00px;font-size:12px;color:#222;transform:scaleX(1.0323);">04/16/2021</span><svg style="left:5px;top:343px;width:21px;height:21px" viewBox="0 0 21 21"><rect x="2.10" y="2.40" width="15.7" height="15.5" rx="1.6" fill="none" stroke="#035f99" stroke-width="2"/></svg><span class="t" style="left:35.40px;top:348.00px;font-size:12px;color:#111;font-weight:bold;transform:scaleX(1.0019);">APR-0000195</span><svg style="left:5px;top:368px;width:21px;height:21px" viewBox="0 0 21 21"><rect x="2.10" y="2.40" width="15.7" height="15.5" rx="1.6" fill="none" stroke="#035f99" stroke-width="2"/></svg><span class="t" style="left:35.40px;top:373.00px;font-size:12px;color:#111;font-weight:bold;transform:scaleX(1.0019);">APR-0000194</span><svg style="left:5px;top:393px;width:21px;height:21px" viewBox="0 0 21 21"><rect x="2.10" y="2.40" width="15.7" height="15.5" rx="1.6" fill="none" stroke="#035f99" stroke-width="2"/></svg><span class="t" style="left:35.40px;top:398.00px;font-size:12px;color:#222;transform:scaleX(0.9152);">APR-0000193</span><svg style="left:5px;top:418px;width:21px;height:21px" viewBox="0 0 21 21"><rect x="2.10" y="2.40" width="15.7" height="15.5" rx="1.6" fill="none" stroke="#035f99" stroke-width="2"/></svg><span class="t" style="left:35.40px;top:423.00px;font-size:12px;color:#111;font-weight:bold;transform:scaleX(1.0019);">APR-0000192</span><svg style="left:5px;top:443px;width:21px;height:21px" viewBox="0 0 21 21"><rect x="2.10" y="2.40" width="15.7" height="15.5" rx="1.6" fill="none" stroke="#035f99" stroke-width="2"/></svg><span class="t" style="left:35.40px;top:448.00px;font-size:12px;color:#111;font-weight:bold;transform:scaleX(1.0019);">APR-0000191</span><svg style="left:5px;top:468px;width:21px;height:21px" viewBox="0 0 21 21"><rect x="2.10" y="2.40" width="15.7" height="15.5" rx="1.6" fill="none" stroke="#035f99" stroke-width="2"/></svg><span class="t" style="left:35.40px;top:473.00px;font-size:12px;color:#222;transform:scaleX(0.9152);">APR-0000190</span><svg style="left:5px;top:493px;width:21px;height:21px" viewBox="0 0 21 21"><rect x="1.10" y="1.40" width="17.7" height="17.5" rx="2.2" fill="#035f99"/><path d="M3.80 10.50L7.90 14.60L16.30 5.90" fill="none" stroke="#fff" stroke-width="1.8"/></svg><span class="t" style="left:35.40px;top:498.00px;font-size:12px;color:#111;font-weight:bold;transform:scaleX(1.0019);">APR-0000189</span><svg style="left:5px;top:518px;width:21px;height:21px" viewBox="0 0 21 21"><rect x="2.10" y="2.40" width="15.7" height="15.5" rx="1.6" fill="none" stroke="#035f99" stroke-width="2"/></svg><span class="t" style="left:35.40px;top:523.00px;font-size:12px;color:#111;font-weight:bold;transform:scaleX(1.0019);">APR-0000188</span><svg style="left:5px;top:543px;width:21px;height:21px" viewBox="0 0 21 21"><rect x="2.10" y="2.40" width="15.7" height="15.5" rx="1.6" fill="none" stroke="#035f99" stroke-width="2"/></svg><span class="t" style="left:35.40px;top:548.00px;font-size:12px;color:#111;font-weight:bold;transform:scaleX(1.0019);">APR-0000187</span><svg style="left:5px;top:568px;width:21px;height:21px" viewBox="0 0 21 21"><rect x="2.10" y="2.40" width="15.7" height="15.5" rx="1.6" fill="none" stroke="#035f99" stroke-width="2"/></svg><span class="t" style="left:35.40px;top:573.00px;font-size:12px;color:#111;font-weight:bold;transform:scaleX(1.0019);">APR-0000186</span><svg style="left:5px;top:593px;width:21px;height:21px" viewBox="0 0 21 21"><rect x="2.10" y="2.40" width="15.7" height="15.5" rx="1.6" fill="none" stroke="#035f99" stroke-width="2"/></svg><span class="t" style="left:35.40px;top:598.00px;font-size:12px;color:#222;transform:scaleX(0.9152);">APR-0000184</span><svg style="left:5px;top:618px;width:21px;height:21px" viewBox="0 0 21 21"><rect x="2.10" y="2.40" width="15.7" height="15.5" rx="1.6" fill="none" stroke="#035f99" stroke-width="2"/></svg><span class="t" style="left:35.40px;top:623.00px;font-size:12px;color:#222;transform:scaleX(0.9152);">APR-0000183</span><svg style="left:5px;top:643px;width:21px;height:21px" viewBox="0 0 21 21"><rect x="2.10" y="2.40" width="15.7" height="15.5" rx="1.6" fill="none" stroke="#035f99" stroke-width="2"/></svg><span class="t" style="left:35.40px;top:648.00px;font-size:12px;color:#222;transform:scaleX(0.9152);">APR-0000182</span><svg style="left:5px;top:668px;width:21px;height:21px" viewBox="0 0 21 21"><rect x="2.10" y="2.40" width="15.7" height="15.5" rx="1.6" fill="none" stroke="#035f99" stroke-width="2"/></svg><span class="t" style="left:35.40px;top:673.00px;font-size:12px;color:#111;font-weight:bold;transform:scaleX(1.0019);">APR-0000181</span><svg style="left:5px;top:693px;width:21px;height:21px" viewBox="0 0 21 21"><rect x="2.10" y="2.40" width="15.7" height="15.5" rx="1.6" fill="none" stroke="#035f99" stroke-width="2"/></svg><span class="t" style="left:35.40px;top:698.00px;font-size:12px;color:#222;transform:scaleX(0.9152);">APR-0000180</span><svg style="left:5px;top:718px;width:21px;height:21px" viewBox="0 0 21 21"><rect x="2.10" y="2.40" width="15.7" height="15.5" rx="1.6" fill="none" stroke="#035f99" stroke-width="2"/></svg><span class="t" style="left:35.40px;top:723.00px;font-size:12px;color:#222;transform:scaleX(0.9152);">APR-0000179</span><svg style="left:5px;top:743px;width:21px;height:21px" viewBox="0 0 21 21"><rect x="2.10" y="2.40" width="15.7" height="15.5" rx="1.6" fill="none" stroke="#035f99" stroke-width="2"/></svg><span class="t" style="left:35.40px;top:748.00px;font-size:12px;color:#222;transform:scaleX(0.9152);">APR-0000178</span><svg style="left:5px;top:768px;width:21px;height:21px" viewBox="0 0 21 21"><rect x="2.10" y="2.40" width="15.7" height="15.5" rx="1.6" fill="none" stroke="#035f99" stroke-width="2"/></svg><span class="t" style="left:35.40px;top:773.00px;font-size:12px;color:#222;transform:scaleX(0.9152);">APR-0000175</span><span class="t" style="left:537.00px;top:773.00px;font-size:12px;color:#222;transform:scaleX(0.8990);">3</span><span class="t" style="left:1181.00px;top:773.00px;font-size:12px;color:#222;transform:scaleX(0.8990);">0</span><span class="t" style="left:1249.00px;top:773.00px;font-size:12px;color:#222;transform:scaleX(0.9541);">Not Reserved</span><svg style="left:5px;top:793px;width:21px;height:21px" viewBox="0 0 21 21"><rect x="2.10" y="2.40" width="15.7" height="15.5" rx="1.6" fill="none" stroke="#035f99" stroke-width="2"/></svg><span class="t" style="left:35.40px;top:798.00px;font-size:12px;color:#222;transform:scaleX(0.9152);">APR-0000172</span><span class="t" style="left:537.00px;top:798.00px;font-size:12px;color:#222;transform:scaleX(0.8990);">2</span><span class="t" style="left:1181.00px;top:798.00px;font-size:12px;color:#222;transform:scaleX(0.8990);">0</span><span class="t" style="left:1249.00px;top:798.00px;font-size:12px;color:#222;transform:scaleX(0.9541);">Not Reserved</span></div><div style="left:1908.8px;top:206px;width:7.4px;height:464px;background:#dadada;"></div><svg style="left:1907px;top:194px;width:11px;height:7px" viewBox="0 0 11 7"><path d="M1 6L5.5 1.5L10 6" fill="none" stroke="#ececec" stroke-width="1"/></svg><svg style="left:1907px;top:983px;width:11px;height:7px" viewBox="0 0 11 7"><path d="M1 1L5.5 5.5L10 1" fill="none" stroke="#ececec" stroke-width="1"/></svg><div style="left:290px;top:1005px;width:90px;height:25px;background:#035f99;border-radius:1px;"></div><span class="t" style="left:305.50px;top:1012.00px;font-size:12px;color:#fff;transform:scaleX(0.9105);">CALENDAR</span><div style="left:390px;top:1005px;width:92px;height:25px;background:#035f99;border-radius:1px;"></div><span class="t" style="left:405.20px;top:1012.00px;font-size:12px;color:#fff;transform:scaleX(0.8745);">VIEW ITEMS</span><div style="left:1156px;top:1005px;width:158px;height:25px;background:#035f99;border-radius:1px;"></div><span class="t" style="left:1171.30px;top:1012.00px;font-size:12px;color:#fff;transform:scaleX(0.8514);">CREATE PROD. REQUEST</span><div style="left:1324px;top:1005px;width:207px;height:25px;background:#035f99;border-radius:1px;"></div><span class="t" style="left:1339.00px;top:1012.00px;font-size:12px;color:#fff;transform:scaleX(0.8628);">CREATE MARKER PROD. REQUEST</span><div style="left:1541px;top:1005px;width:166px;height:25px;background:#035f99;border-radius:1px;"></div><span class="t" style="left:1556.00px;top:1012.00px;font-size:12px;color:#fff;transform:scaleX(0.9189);">SEND TO CONFIRMATION</span><div style="left:1717px;top:1005px;width:164px;height:25px;background:#035f99;border-radius:1px;"></div><span class="t" style="left:1732.00px;top:1012.00px;font-size:12px;color:#fff;transform:scaleX(0.8972);">SCHEDULE PRODUCTION</span><div style="left:1882px;top:1005px;width:22px;height:25px;background:#035f99;border-radius:1px;"></div><svg style="left:1889px;top:1015.5px;width:8px;height:5px" viewBox="0 0 8 5"><path d="M0 0H8L4 4.4Z" fill="#fff"/></svg><div style="left:603px;top:170px;width:1200px;height:800px;overflow:hidden;background:#c1c1c1;"><div style="left:0px;top:0px;width:1200px;height:35px;background:#25536e;"></div><span class="t" style="left:17.60px;top:12.00px;font-size:14px;color:#b0bcc5;transform:scaleX(0.9572);">Landed Cost</span><div style="left:1052px;top:17px;width:11px;height:2px;background:#a3b2bd;"></div><div style="left:1109px;top:13px;width:11px;height:10px;border:1px solid #a9b8c3;border-top-color:#f2f5f7;border-bottom-color:#f2f5f7;box-sizing:border-box;"></div><svg style="left:1166.5px;top:13px;width:10px;height:10px" viewBox="0 0 10 10"><path d="M0 0L10 10M10 0L0 10" stroke="#fff" stroke-width="1.1"/></svg><span class="t" style="left:9.30px;top:57.00px;font-size:15.3px;color:#1e1e1e;transform:scaleX(1.0008);">Select Bill to Add Landed Cost</span><div style="left:9px;top:90.5px;width:97px;height:24.6px;background:#b5b5b5;"></div><span class="t" style="left:24.30px;top:98.00px;font-size:12px;color:#0b5484;transform:scaleX(0.9161);">EXPAND ALL</span><div style="left:10px;top:170px;width:200px;height:28px;background:#b1b6b9;"></div><div style="left:10px;top:226px;width:200px;height:28px;background:#b1b6b9;"></div><div style="left:10px;top:282px;width:200px;height:28px;background:#b1b6b9;"></div><div style="left:10px;top:338px;width:200px;height:28px;background:#b1b6b9;"></div><div style="left:10px;top:394px;width:200px;height:28px;background:#b1b6b9;"></div><div style="left:10px;top:450px;width:200px;height:28px;background:#b1b6b9;"></div><div style="left:10px;top:506px;width:200px;height:28px;background:#b1b6b9;"></div><div style="left:10px;top:562px;width:200px;height:28px;background:#b1b6b9;"></div><div style="left:10px;top:618px;width:200px;height:28px;background:#b1b6b9;"></div><div style="left:10px;top:674px;width:200px;height:28px;background:#b1b6b9;"></div><div style="left:10px;top:730px;width:200px;height:20px;background:#b1b6b9;"></div><div style="left:9px;top:123px;width:200px;height:1px;background:#b3b3b3;"></div><div style="left:9px;top:169px;width:200px;height:1px;background:#b3b3b3;"></div><div style="left:9px;top:750px;width:200px;height:1px;background:#b3b3b3;"></div><div style="left:9px;top:123px;width:1px;height:628px;background:rgba(120,125,130,0.35);"></div><div style="left:39px;top:123px;width:1px;height:628px;background:rgba(120,125,130,0.35);"></div><div style="left:119px;top:123px;width:1px;height:628px;background:rgba(120,125,130,0.35);"></div><span class="t" style="left:45.30px;top:126.00px;font-size:12px;color:#1e1e1e;transform:scaleX(1.0176);">Order /</span><span class="t" style="left:45.30px;top:141.00px;font-size:12px;color:#1e1e1e;transform:scaleX(1.0331);">Item /</span><span class="t" style="left:45.30px;top:156.00px;font-size:12px;color:#1e1e1e;transform:scaleX(0.9208);">Expense</span><span class="t" style="left:125.30px;top:134.00px;font-size:12px;color:#1e1e1e;transform:scaleX(1.0290);">Vendor /</span><span class="t" style="left:125.30px;top:149.00px;font-size:12px;color:#1e1e1e;transform:scaleX(0.9829);">Description</span><span class="t" style="left:187.70px;top:767.00px;font-size:12px;color:#1e1e1e;transform:scaleX(0.8857);">Sp</span><div style="left:200px;top:35px;width:999px;height:764px;background:#fff;"></div><svg style="left:210px;top:48px;width:17px;height:14px" viewBox="0 0 17 14"><path d="M16 7H2M7.6 1L1.6 7L7.6 13" fill="none" stroke="#035f99" stroke-width="1.8"/></svg><span class="t" style="left:238.30px;top:48.00px;font-size:16.6px;color:#1c1c1c;transform:scaleX(1.0107);">Add Production Items</span><div style="left:200px;top:72px;width:199px;height:670px;background:#e6e6e6;"></div><span class="t" style="left:210.80px;top:84.00px;font-size:15px;color:#111;font-weight:bold;transform:scaleX(0.9397);">Filters</span><svg style="left:340px;top:84.30000000000001px;width:20px;height:16px" viewBox="0 0 20 16"><g fill="none" stroke="#035f99" stroke-width="1.55"><path d="M4.4 8.6A5.6 5.6 0 0 1 12.6 3.05"/><path d="M15.6 7.4A5.6 5.6 0 0 1 7.4 12.95"/></g><path d="M1.1 8.3H7.7L4.4 11.1Z" fill="#035f99"/><path d="M12.3 7.7H18.9L15.6 4.9Z" fill="#035f99"/></svg><svg style="left:369.5px;top:84.30000000000001px;width:16px;height:16px" viewBox="0 0 16 16"><circle cx="8" cy="8" r="8" fill="#035f99"/><path d="M4.6 4.6L11.4 11.4M11.4 4.6L4.6 11.4" stroke="#fff" stroke-width="1.4"/></svg><span class="t" style="left:210.00px;top:119.00px;font-size:12px;color:#484848;transform:scaleX(0.9576);">Customer:</span><div style="left:210px;top:136.3px;width:179px;height:24.5px;background:#fff;border-radius:2px;"></div><span class="t" style="left:215.60px;top:143.00px;font-size:12px;color:#a9a9a9;transform:scaleX(0.9647);">Select customer</span><svg style="left:375px;top:147.05px;width:9.6px;height:6.4px" viewBox="0 0 9.6 6.4"><path d="M0 0H9.6L4.8 6.4Z" fill="#c0c0c0"/></svg><span class="t" style="left:210.00px;top:172.00px;font-size:12px;color:#484848;transform:scaleX(0.9675);">Item Name:</span><div style="left:210px;top:189.3px;width:179px;height:24.5px;background:#fff;border-radius:2px;"></div><span class="t" style="left:215.60px;top:196.00px;font-size:12px;color:#a9a9a9;transform:scaleX(0.9600);">Select item name</span><svg style="left:375px;top:200.05px;width:9.6px;height:6.4px" viewBox="0 0 9.6 6.4"><path d="M0 0H9.6L4.8 6.4Z" fill="#c0c0c0"/></svg><span class="t" style="left:210.00px;top:225.00px;font-size:12px;color:#484848;transform:scaleX(0.9943);">Description:</span><div style="left:210.39999999999998px;top:242.7px;width:178.2px;height:23.6px;background:#fff;border-radius:2px;"></div><span class="t" style="left:216.00px;top:249.00px;font-size:12px;color:#a9a9a9;transform:scaleX(0.9883);">Enter description</span><span class="t" style="left:210.00px;top:278.00px;font-size:12px;color:#484848;transform:scaleX(0.9769);">Order #:</span><div style="left:210.39999999999998px;top:295.7px;width:178.2px;height:23.6px;background:#fff;border-radius:2px;"></div><span class="t" style="left:216.00px;top:302.00px;font-size:12px;color:#a9a9a9;transform:scaleX(0.9832);">Order #</span><span class="t" style="left:210.00px;top:331.00px;font-size:12px;color:#484848;transform:scaleX(0.9471);">Customer PO:</span><div style="left:210.39999999999998px;top:348.70000000000005px;width:178.2px;height:23.6px;background:#fff;border-radius:2px;"></div><span class="t" style="left:216.00px;top:355.00px;font-size:12px;color:#a9a9a9;transform:scaleX(0.9493);">Customer PO</span><span class="t" style="left:210.00px;top:384.00px;font-size:12px;color:#484848;transform:scaleX(0.9370);">Store:</span><div style="left:210px;top:401.29999999999995px;width:179px;height:24.5px;background:#fff;border-radius:2px;"></div><span class="t" style="left:215.60px;top:408.00px;font-size:12px;color:#a9a9a9;transform:scaleX(0.9469);">Select store</span><svg style="left:375px;top:412.04999999999995px;width:9.6px;height:6.4px" viewBox="0 0 9.6 6.4"><path d="M0 0H9.6L4.8 6.4Z" fill="#c0c0c0"/></svg><span class="t" style="left:210.00px;top:437.00px;font-size:12px;color:#484848;transform:scaleX(0.9370);">Status:</span><div style="left:210px;top:454.29999999999995px;width:178px;height:24.5px;background:#fff;border-radius:2px;"></div><span class="t" style="left:215.60px;top:461.00px;font-size:12px;color:#a9a9a9;transform:scaleX(0.9751);">Select action</span><svg style="left:371px;top:465.04999999999995px;width:9.6px;height:6.4px" viewBox="0 0 9.6 6.4"><path d="M0 0H9.6L4.8 6.4Z" fill="#c0c0c0"/></svg><div style="left:399px;top:73px;width:1px;height:669px;background:#5a5a5a;"></div><div style="left:400px;top:73px;width:784px;height:1px;background:#d3d6d8;"></div><div style="left:400px;top:104px;width:784px;height:1px;background:#cfd2d4;"></div><div style="left:400px;top:105px;width:785px;height:637px;overflow:hidden;"><div style="left:0px;top:0px;width:784px;height:25px;background:#ecf3f7;"></div><div style="left:0px;top:50px;width:784px;height:30px;background:#ecf3f7;"></div><div style="left:0px;top:110px;width:784px;height:30px;background:#ecf3f7;"></div><div style="left:0px;top:165px;width:784px;height:30px;background:#ecf3f7;"></div><div style="left:0px;top:225px;width:784px;height:30px;background:#ecf3f7;"></div><div style="left:0px;top:285px;width:784px;height:30px;background:#ecf3f7;"></div><div style="left:0px;top:345px;width:784px;height:30px;background:#ecf3f7;"></div><div style="left:0px;top:405px;width:784px;height:30px;background:#ecf3f7;"></div><div style="left:0px;top:465px;width:784px;height:30px;background:#ecf3f7;"></div><div style="left:0px;top:540px;width:784px;height:45px;background:#ecf3f7;"></div><div style="left:0px;top:630px;width:784px;height:45px;background:#ecf3f7;"></div><div style="left:29px;top:0px;width:1px;height:640px;background:rgba(110,125,135,0.17);"></div><div style="left:119px;top:0px;width:1px;height:640px;background:rgba(110,125,135,0.17);"></div><div style="left:199px;top:0px;width:1px;height:640px;background:rgba(110,125,135,0.17);"></div><div style="left:279px;top:0px;width:1px;height:640px;background:rgba(110,125,135,0.17);"></div><div style="left:423px;top:0px;width:1px;height:640px;background:rgba(110,125,135,0.17);"></div><div style="left:567px;top:0px;width:1px;height:640px;background:rgba(110,125,135,0.17);"></div><div style="left:711px;top:0px;width:1px;height:640px;background:rgba(110,125,135,0.17);"></div><div style="left:783px;top:0px;width:1px;height:640px;background:rgba(110,125,135,0.17);"></div><svg style="left:5px;top:3px;width:21px;height:21px" viewBox="0 0 21 21"><rect x="2.10" y="2.10" width="15.8" height="15.7" rx="1.6" fill="none" stroke="#035f99" stroke-width="2"/></svg><span class="t" style="left:35.00px;top:7.00px;font-size:12px;color:#222;transform:scaleX(0.9152);">APR-0000096</span><span class="t" style="left:204.60px;top:7.00px;font-size:12px;color:#222;transform:scaleX(0.9240);">Jay Catch</span><span class="t" style="left:285.00px;top:7.00px;font-size:12px;color:#222;transform:scaleX(1.0051);">Hatch Door</span><span class="t" style="left:717.00px;top:7.00px;font-size:12px;color:#39a845;transform:scaleX(1.0098);">Completed</span><svg style="left:5px;top:28px;width:21px;height:21px" viewBox="0 0 21 21"><rect x="2.10" y="2.10" width="15.8" height="15.7" rx="1.6" fill="none" stroke="#035f99" stroke-width="2"/></svg><span class="t" style="left:35.00px;top:32.00px;font-size:12px;color:#222;transform:scaleX(0.9152);">APR-0000097</span><span class="t" style="left:204.60px;top:32.00px;font-size:12px;color:#222;transform:scaleX(0.9240);">Jay Catch</span><span class="t" style="left:285.00px;top:32.00px;font-size:12px;color:#222;transform:scaleX(1.0051);">Hatch Door</span><span class="t" style="left:717.00px;top:32.00px;font-size:12px;color:#39a845;transform:scaleX(1.0098);">Completed</span><svg style="left:5px;top:55px;width:21px;height:21px" viewBox="0 0 21 21"><rect x="2.10" y="2.10" width="15.8" height="15.7" rx="1.6" fill="none" stroke="#035f99" stroke-width="2"/></svg><span class="t" style="left:35.00px;top:60.00px;font-size:12px;color:#075b96;transform:scaleX(0.9889);">SO-0015386</span><span class="t" style="left:125.00px;top:52.00px;font-size:12px;color:#222;transform:scaleX(0.9750);">Harry</span><span class="t" style="left:125.00px;top:67.00px;font-size:12px;color:#222;transform:scaleX(0.9828);">Herman Co</span><span class="t" style="left:204.60px;top:60.00px;font-size:12px;color:#222;transform:scaleX(0.9240);">Jay Catch</span><span class="t" style="left:285.00px;top:60.00px;font-size:12px;color:#222;transform:scaleX(1.0051);">Hatch Door</span><span class="t" style="left:717.00px;top:60.00px;font-size:12px;color:#39a845;transform:scaleX(1.0098);">Completed</span><svg style="left:5px;top:85px;width:21px;height:21px" viewBox="0 0 21 21"><rect x="2.10" y="2.10" width="15.8" height="15.7" rx="1.6" fill="none" stroke="#035f99" stroke-width="2"/></svg><span class="t" style="left:35.00px;top:90.00px;font-size:12px;color:#075b96;transform:scaleX(0.9889);">SO-0015388</span><span class="t" style="left:125.00px;top:82.00px;font-size:12px;color:#222;transform:scaleX(0.9750);">Harry</span><span class="t" style="left:125.00px;top:97.00px;font-size:12px;color:#222;transform:scaleX(0.9828);">Herman Co</span><span class="t" style="left:204.60px;top:82.00px;font-size:12px;color:#222;transform:scaleX(0.9626);">Joist Door</span><span class="t" style="left:204.60px;top:97.00px;font-size:12px;color:#222;transform:scaleX(0.9728);">Assembly</span><span class="t" style="left:285.00px;top:82.00px;font-size:12px;color:#222;transform:scaleX(0.9868);">Assemble new door</span><span class="t" style="left:285.00px;top:97.00px;font-size:12px;color:#222;transform:scaleX(0.9993);">knobs</span><span class="t" style="left:717.00px;top:90.00px;font-size:12px;color:#39a845;transform:scaleX(1.0098);">Completed</span><svg style="left:5px;top:115px;width:21px;height:21px" viewBox="0 0 21 21"><rect x="2.10" y="2.10" width="15.8" height="15.7" rx="1.6" fill="none" stroke="#035f99" stroke-width="2"/></svg><span class="t" style="left:35.00px;top:120.00px;font-size:12px;color:#075b96;transform:scaleX(0.9889);">SO-0015388</span><span class="t" style="left:125.00px;top:112.00px;font-size:12px;color:#222;transform:scaleX(0.9750);">Harry</span><span class="t" style="left:125.00px;top:127.00px;font-size:12px;color:#222;transform:scaleX(0.9828);">Herman Co</span><span class="t" style="left:204.60px;top:120.00px;font-size:12px;color:#222;transform:scaleX(0.9240);">Jay Catch</span><span class="t" style="left:285.00px;top:120.00px;font-size:12px;color:#222;transform:scaleX(1.0051);">Hatch Door</span><span class="t" style="left:717.00px;top:120.00px;font-size:12px;color:#39a845;transform:scaleX(1.0098);">Completed</span><svg style="left:5px;top:143px;width:21px;height:21px" viewBox="0 0 21 21"><rect x="2.10" y="2.10" width="15.8" height="15.7" rx="1.6" fill="none" stroke="#035f99" stroke-width="2"/></svg><span class="t" style="left:35.00px;top:147.00px;font-size:12px;color:#222;transform:scaleX(0.9152);">APR-0000102</span><span class="t" style="left:204.60px;top:147.00px;font-size:12px;color:#222;transform:scaleX(0.9240);">Jay Catch</span><span class="t" style="left:285.00px;top:147.00px;font-size:12px;color:#222;transform:scaleX(1.0051);">Hatch Door</span><span class="t" style="left:717.00px;top:147.00px;font-size:12px;color:#39a845;transform:scaleX(1.0098);">Completed</span><svg style="left:5px;top:170px;width:21px;height:21px" viewBox="0 0 21 21"><rect x="2.10" y="2.10" width="15.8" height="15.7" rx="1.6" fill="none" stroke="#035f99" stroke-width="2"/></svg><span class="t" style="left:35.00px;top:175.00px;font-size:12px;color:#222;transform:scaleX(0.9152);">APR-0000103</span><span class="t" style="left:204.60px;top:167.00px;font-size:12px;color:#222;transform:scaleX(1.0281);">Office</span><span class="t" style="left:204.60px;top:182.00px;font-size:12px;color:#222;transform:scaleX(0.9671);">Cabinet</span><span class="t" style="left:717.00px;top:175.00px;font-size:12px;color:#39a845;transform:scaleX(1.0098);">Completed</span><svg style="left:5px;top:200px;width:21px;height:21px" viewBox="0 0 21 21"><rect x="2.10" y="2.10" width="15.8" height="15.7" rx="1.6" fill="none" stroke="#035f99" stroke-width="2"/></svg><span class="t" style="left:35.00px;top:205.00px;font-size:12px;color:#222;transform:scaleX(0.9152);">APR-0000104</span><span class="t" style="left:204.60px;top:197.00px;font-size:12px;color:#222;transform:scaleX(0.9626);">Joist Door</span><span class="t" style="left:204.60px;top:212.00px;font-size:12px;color:#222;transform:scaleX(0.9728);">Assembly</span><span class="t" style="left:285.00px;top:197.00px;font-size:12px;color:#222;transform:scaleX(0.9868);">Assemble new door</span><span class="t" style="left:285.00px;top:212.00px;font-size:12px;color:#222;transform:scaleX(0.9993);">knobs</span><span class="t" style="left:717.00px;top:205.00px;font-size:12px;color:#39a845;transform:scaleX(1.0098);">Completed</span><svg style="left:5px;top:230px;width:21px;height:21px" viewBox="0 0 21 21"><rect x="2.10" y="2.10" width="15.8" height="15.7" rx="1.6" fill="none" stroke="#035f99" stroke-width="2"/></svg><span class="t" style="left:35.00px;top:235.00px;font-size:12px;color:#222;transform:scaleX(0.9152);">APR-0000105</span><span class="t" style="left:204.60px;top:227.00px;font-size:12px;color:#222;transform:scaleX(0.9626);">Joist Door</span><span class="t" style="left:204.60px;top:242.00px;font-size:12px;color:#222;transform:scaleX(0.9728);">Assembly</span><span class="t" style="left:285.00px;top:227.00px;font-size:12px;color:#222;transform:scaleX(0.9868);">Assemble new door</span><span class="t" style="left:285.00px;top:242.00px;font-size:12px;color:#222;transform:scaleX(0.9993);">knobs</span><span class="t" style="left:717.00px;top:235.00px;font-size:12px;color:#39a845;transform:scaleX(1.0098);">Completed</span><svg style="left:5px;top:260px;width:21px;height:21px" viewBox="0 0 21 21"><rect x="2.10" y="2.10" width="15.8" height="15.7" rx="1.6" fill="none" stroke="#035f99" stroke-width="2"/></svg><span class="t" style="left:35.00px;top:265.00px;font-size:12px;color:#075b96;transform:scaleX(1.0139);">SO-0025669</span><span class="t" style="left:125.00px;top:257.00px;font-size:12px;color:#222;transform:scaleX(0.9867);">106 North</span><span class="t" style="left:125.00px;top:272.00px;font-size:12px;color:#222;transform:scaleX(0.9847);">Main Rd</span><span class="t" style="left:204.60px;top:257.00px;font-size:12px;color:#222;transform:scaleX(0.9926);">Wood Stock</span><span class="t" style="left:204.60px;top:272.00px;font-size:12px;color:#222;transform:scaleX(0.9760);">Table</span><span class="t" style="left:285.00px;top:257.00px;font-size:12px;color:#222;transform:scaleX(1.0021);">Gold Table with</span><span class="t" style="left:285.00px;top:272.00px;font-size:12px;color:#222;transform:scaleX(1.0179);">breakfront</span><span class="t" style="left:717.00px;top:265.00px;font-size:12px;color:#39a845;transform:scaleX(1.0098);">Completed</span><svg style="left:5px;top:290px;width:21px;height:21px" viewBox="0 0 21 21"><rect x="2.10" y="2.10" width="15.8" height="15.7" rx="1.6" fill="none" stroke="#035f99" stroke-width="2"/></svg><span class="t" style="left:35.00px;top:295.00px;font-size:12px;color:#075b96;transform:scaleX(1.0139);">SO-0025672</span><span class="t" style="left:125.00px;top:295.00px;font-size:12px;color:#222;transform:scaleX(0.9677);">New Go Tube</span><span class="t" style="left:204.60px;top:287.00px;font-size:12px;color:#222;transform:scaleX(0.9926);">Wood Stock</span><span class="t" style="left:204.60px;top:302.00px;font-size:12px;color:#222;transform:scaleX(0.9760);">Table</span><span class="t" style="left:285.00px;top:287.00px;font-size:12px;color:#222;transform:scaleX(1.0021);">Gold Table with</span><span class="t" style="left:285.00px;top:302.00px;font-size:12px;color:#222;transform:scaleX(1.0179);">breakfront</span><span class="t" style="left:717.00px;top:295.00px;font-size:12px;color:#39a845;transform:scaleX(1.0098);">Completed</span><svg style="left:5px;top:320px;width:21px;height:21px" viewBox="0 0 21 21"><rect x="2.10" y="2.10" width="15.8" height="15.7" rx="1.6" fill="none" stroke="#035f99" stroke-width="2"/></svg><span class="t" style="left:35.00px;top:325.00px;font-size:12px;color:#075b96;transform:scaleX(1.0139);">SO-0025699</span><span class="t" style="left:125.00px;top:317.00px;font-size:12px;color:#222;transform:scaleX(0.9867);">106 North</span><span class="t" style="left:125.00px;top:332.00px;font-size:12px;color:#222;transform:scaleX(0.9847);">Main Rd</span><span class="t" style="left:204.60px;top:317.00px;font-size:12px;color:#222;transform:scaleX(0.9926);">Wood Stock</span><span class="t" style="left:204.60px;top:332.00px;font-size:12px;color:#222;transform:scaleX(0.9760);">Table</span><span class="t" style="left:285.00px;top:317.00px;font-size:12px;color:#222;transform:scaleX(1.0021);">Gold Table with</span><span class="t" style="left:285.00px;top:332.00px;font-size:12px;color:#222;transform:scaleX(1.0179);">breakfront</span><span class="t" style="left:717.00px;top:325.00px;font-size:12px;color:#39a845;transform:scaleX(1.0098);">Completed</span><svg style="left:5px;top:350px;width:21px;height:21px" viewBox="0 0 21 21"><rect x="2.10" y="2.10" width="15.8" height="15.7" rx="1.6" fill="none" stroke="#035f99" stroke-width="2"/></svg><span class="t" style="left:35.00px;top:355.00px;font-size:12px;color:#075b96;transform:scaleX(1.0139);">SO-0025726</span><span class="t" style="left:125.00px;top:347.00px;font-size:12px;color:#222;transform:scaleX(0.9991);">Bedding</span><span class="t" style="left:125.00px;top:362.00px;font-size:12px;color:#222;transform:scaleX(1.0297);">Hospitality</span><span class="t" style="left:204.60px;top:347.00px;font-size:12px;color:#222;transform:scaleX(1.0281);">Office</span><span class="t" style="left:204.60px;top:362.00px;font-size:12px;color:#222;transform:scaleX(0.9671);">Cabinet</span><span class="t" style="left:717.00px;top:355.00px;font-size:12px;color:#39a845;transform:scaleX(1.0098);">Completed</span><svg style="left:5px;top:380px;width:21px;height:21px" viewBox="0 0 21 21"><rect x="2.10" y="2.10" width="15.8" height="15.7" rx="1.6" fill="none" stroke="#035f99" stroke-width="2"/></svg><span class="t" style="left:35.00px;top:385.00px;font-size:12px;color:#075b96;transform:scaleX(1.0139);">SO-0025672</span><span class="t" style="left:125.00px;top:385.00px;font-size:12px;color:#222;transform:scaleX(0.9677);">New Go Tube</span><span class="t" style="left:204.60px;top:377.00px;font-size:12px;color:#222;transform:scaleX(1.0281);">Office</span><span class="t" style="left:204.60px;top:392.00px;font-size:12px;color:#222;transform:scaleX(0.9671);">Cabinet</span><span class="t" style="left:717.00px;top:385.00px;font-size:12px;color:#39a845;transform:scaleX(1.0098);">Completed</span><svg style="left:5px;top:410px;width:21px;height:21px" viewBox="0 0 21 21"><rect x="2.10" y="2.10" width="15.8" height="15.7" rx="1.6" fill="none" stroke="#035f99" stroke-width="2"/></svg><span class="t" style="left:35.00px;top:415.00px;font-size:12px;color:#075b96;transform:scaleX(1.0139);">SO-0025747</span><span class="t" style="left:125.00px;top:407.00px;font-size:12px;color:#222;transform:scaleX(0.9991);">Bedding</span><span class="t" style="left:125.00px;top:422.00px;font-size:12px;color:#222;transform:scaleX(1.0297);">Hospitality</span><span class="t" style="left:204.60px;top:415.00px;font-size:12px;color:#222;transform:scaleX(0.9240);">Jay Catch</span><span class="t" style="left:285.00px;top:415.00px;font-size:12px;color:#222;transform:scaleX(1.0051);">Hatch Door</span><span class="t" style="left:717.00px;top:415.00px;font-size:12px;color:#39a845;transform:scaleX(1.0098);">Completed</span><svg style="left:5px;top:440px;width:21px;height:21px" viewBox="0 0 21 21"><rect x="2.10" y="2.10" width="15.8" height="15.7" rx="1.6" fill="none" stroke="#035f99" stroke-width="2"/></svg><span class="t" style="left:35.00px;top:445.00px;font-size:12px;color:#075b96;transform:scaleX(1.0139);">SO-0025749</span><span class="t" style="left:125.00px;top:437.00px;font-size:12px;color:#222;transform:scaleX(0.9991);">Bedding</span><span class="t" style="left:125.00px;top:452.00px;font-size:12px;color:#222;transform:scaleX(1.0297);">Hospitality</span><span class="t" style="left:204.60px;top:445.00px;font-size:12px;color:#222;transform:scaleX(0.9240);">Jay Catch</span><span class="t" style="left:285.00px;top:445.00px;font-size:12px;color:#222;transform:scaleX(1.0051);">Hatch Door</span><span class="t" style="left:717.00px;top:445.00px;font-size:12px;color:#39a845;transform:scaleX(1.0098);">Completed</span><svg style="left:5px;top:470px;width:21px;height:21px" viewBox="0 0 21 21"><rect x="2.10" y="2.10" width="15.8" height="15.7" rx="1.6" fill="none" stroke="#035f99" stroke-width="2"/></svg><span class="t" style="left:35.00px;top:475.00px;font-size:12px;color:#075b96;transform:scaleX(1.0139);">SO-0025806</span><span class="t" style="left:125.00px;top:467.00px;font-size:12px;color:#222;transform:scaleX(0.9806);">New England</span><span class="t" style="left:125.00px;top:482.00px;font-size:12px;color:#222;transform:scaleX(1.0091);">Patriot</span><span class="t" style="left:204.60px;top:475.00px;font-size:12px;color:#222;transform:scaleX(0.9240);">Jay Catch</span><span class="t" style="left:285.00px;top:475.00px;font-size:12px;color:#222;transform:scaleX(1.0051);">Hatch Door</span><span class="t" style="left:717.00px;top:475.00px;font-size:12px;color:#39a845;transform:scaleX(1.0098);">Completed</span><svg style="left:5px;top:507px;width:21px;height:21px" viewBox="0 0 21 21"><rect x="2.10" y="2.60" width="15.8" height="15.7" rx="1.6" fill="none" stroke="#035f99" stroke-width="2"/></svg><span class="t" style="left:35.00px;top:512.00px;font-size:12px;color:#075b96;transform:scaleX(0.9889);">SO-0025818</span><span class="t" style="left:125.00px;top:512.00px;font-size:12px;color:#222;transform:scaleX(0.9415);">739 Park Ave</span><span class="t" style="left:204.60px;top:505.00px;font-size:12px;color:#222;transform:scaleX(0.9589);">2'6"x6'8"CS6'</span><span class="t" style="left:204.60px;top:520.00px;font-size:12px;color:#222;transform:scaleX(0.9339);">8"3-7/8PJSNH</span><span class="t" style="left:285.00px;top:497.00px;font-size:12px;color:#222;transform:scaleX(0.9565);">2'6" x 6'8" Carrara Solid</span><span class="t" style="left:285.00px;top:512.00px;font-size:12px;color:#222;transform:scaleX(0.9647);">6'8" 3-7/8 Primed Jambs</span><span class="t" style="left:285.00px;top:527.00px;font-size:12px;color:#222;transform:scaleX(0.9893);">Satin Nickel Hinge</span><span class="t" style="left:717.00px;top:512.00px;font-size:12px;color:#39a845;transform:scaleX(1.0098);">Completed</span><svg style="left:5px;top:552px;width:21px;height:21px" viewBox="0 0 21 21"><rect x="2.10" y="2.60" width="15.8" height="15.7" rx="1.6" fill="none" stroke="#035f99" stroke-width="2"/></svg><span class="t" style="left:35.00px;top:557.00px;font-size:12px;color:#075b96;transform:scaleX(1.0139);">SO-0025854</span><span class="t" style="left:125.00px;top:557.00px;font-size:12px;color:#222;transform:scaleX(0.9415);">739 Park Ave</span><span class="t" style="left:204.60px;top:550.00px;font-size:12px;color:#222;transform:scaleX(0.9589);">2'6"x6'8"CS6'</span><span class="t" style="left:204.60px;top:565.00px;font-size:12px;color:#222;transform:scaleX(0.9339);">8"3-7/8PJSNH</span><span class="t" style="left:285.00px;top:542.00px;font-size:12px;color:#222;transform:scaleX(0.9565);">2'6" x 6'8" Carrara Solid</span><span class="t" style="left:285.00px;top:557.00px;font-size:12px;color:#222;transform:scaleX(0.9647);">6'8" 3-7/8 Primed Jambs</span><span class="t" style="left:285.00px;top:572.00px;font-size:12px;color:#222;transform:scaleX(0.9893);">Satin Nickel Hinge</span><span class="t" style="left:717.00px;top:557.00px;font-size:12px;color:#39a845;transform:scaleX(1.0098);">Completed</span><svg style="left:5px;top:597px;width:21px;height:21px" viewBox="0 0 21 21"><rect x="2.10" y="2.60" width="15.8" height="15.7" rx="1.6" fill="none" stroke="#035f99" stroke-width="2"/></svg><span class="t" style="left:35.00px;top:602.00px;font-size:12px;color:#075b96;transform:scaleX(1.0139);">SO-0025860</span><span class="t" style="left:125.00px;top:602.00px;font-size:12px;color:#222;transform:scaleX(0.9415);">739 Park Ave</span><span class="t" style="left:204.60px;top:595.00px;font-size:12px;color:#222;transform:scaleX(0.9589);">3'0"x6'8"CS6'</span><span class="t" style="left:204.60px;top:610.00px;font-size:12px;color:#222;transform:scaleX(0.9339);">8"4-5/8PJSNH</span><span class="t" style="left:285.00px;top:587.00px;font-size:12px;color:#222;transform:scaleX(0.9565);">3'0" x 6'8" Carrara Solid</span><span class="t" style="left:285.00px;top:602.00px;font-size:12px;color:#222;transform:scaleX(0.9663);">6'8" 4-5/8 Poplar Jambs</span><span class="t" style="left:285.00px;top:617.00px;font-size:12px;color:#222;transform:scaleX(0.9893);">Satin Nickel Hinge</span><span class="t" style="left:429.00px;top:602.00px;font-size:12px;color:#222;transform:scaleX(0.8990);">123456789</span><span class="t" style="left:717.00px;top:602.00px;font-size:12px;color:#39a845;transform:scaleX(1.0098);">Completed</span><span class="t" style="left:285.00px;top:632.00px;font-size:12px;color:#222;transform:scaleX(0.9565);">3'0" x 6'8" Carrara Solid</span></div><div style="left:429px;top:74px;width:1px;height:30px;background:rgba(110,125,135,0.2);"></div><div style="left:519px;top:74px;width:1px;height:30px;background:rgba(110,125,135,0.2);"></div><div style="left:599px;top:74px;width:1px;height:30px;background:rgba(110,125,135,0.2);"></div><div style="left:679px;top:74px;width:1px;height:30px;background:rgba(110,125,135,0.2);"></div><div style="left:823px;top:74px;width:1px;height:30px;background:rgba(110,125,135,0.2);"></div><div style="left:967px;top:74px;width:1px;height:30px;background:rgba(110,125,135,0.2);"></div><div style="left:1111px;top:74px;width:1px;height:30px;background:rgba(110,125,135,0.2);"></div><div style="left:1183px;top:74px;width:1px;height:30px;background:rgba(110,125,135,0.2);"></div><svg style="left:405px;top:79px;width:21px;height:21px" viewBox="0 0 21 21"><rect x="2.10" y="2.20" width="15.8" height="15.7" rx="1.6" fill="none" stroke="#035f99" stroke-width="2"/></svg><span class="t" style="left:435.00px;top:84.00px;font-size:12px;color:#222;transform:scaleX(0.9832);">Order #</span><span class="t" style="left:525.00px;top:84.00px;font-size:12px;color:#222;transform:scaleX(0.9613);">Customer</span><span class="t" style="left:604.60px;top:84.00px;font-size:12px;color:#222;transform:scaleX(0.9855);">Item</span><span class="t" style="left:685.00px;top:84.00px;font-size:12px;color:#222;transform:scaleX(0.9996);">Description</span><span class="t" style="left:829.00px;top:84.00px;font-size:12px;color:#222;transform:scaleX(0.9493);">Customer PO</span><span class="t" style="left:973.00px;top:84.00px;font-size:12px;color:#222;transform:scaleX(0.9413);">Store</span><span class="t" style="left:1117.00px;top:84.00px;font-size:12px;color:#222;transform:scaleX(0.9406);">Status</span><div style="left:1188px;top:120px;width:7px;height:242px;background:#dadada;"></div><svg style="left:1186px;top:109px;width:11px;height:7px" viewBox="0 0 11 7"><path d="M1 6L5.5 1.5L10 6" fill="none" stroke="#e6e6e6" stroke-width="1"/></svg><svg style="left:1186px;top:730px;width:11px;height:7px" viewBox="0 0 11 7"><path d="M1 1L5.5 5.5L10 1" fill="none" stroke="#e6e6e6" stroke-width="1"/></svg><div style="left:1023px;top:758px;width:75px;height:25px;background:#ececec;border-radius:1px;"></div><span class="t" style="left:1038.50px;top:765.00px;font-size:12px;color:#035f99;transform:scaleX(0.9038);">CANCEL</span><div style="left:1108px;top:758px;width:83px;height:25px;background:#c9c9c9;border-radius:1px;"></div><span class="t" style="left:1123.00px;top:765.00px;font-size:12px;color:#ebebeb;transform:scaleX(0.9069);">ADD ITEM</span><div style="left:0px;top:0px;width:1200px;height:800px;border:1px solid #163a55;box-sizing:border-box;"></div></div><div style="left:791px;top:278px;width:212px;height:439px;border:4px solid #ff5a4b;box-sizing:border-box;filter:drop-shadow(2px 2px 1.8px rgba(0,0,0,.9));"></div><div style="left:984px;top:232px;width:821px;height:49px;border:4px solid #ff5a4b;box-sizing:border-box;filter:drop-shadow(2px 2px 1.8px rgba(0,0,0,.9));"></div></body></html>
